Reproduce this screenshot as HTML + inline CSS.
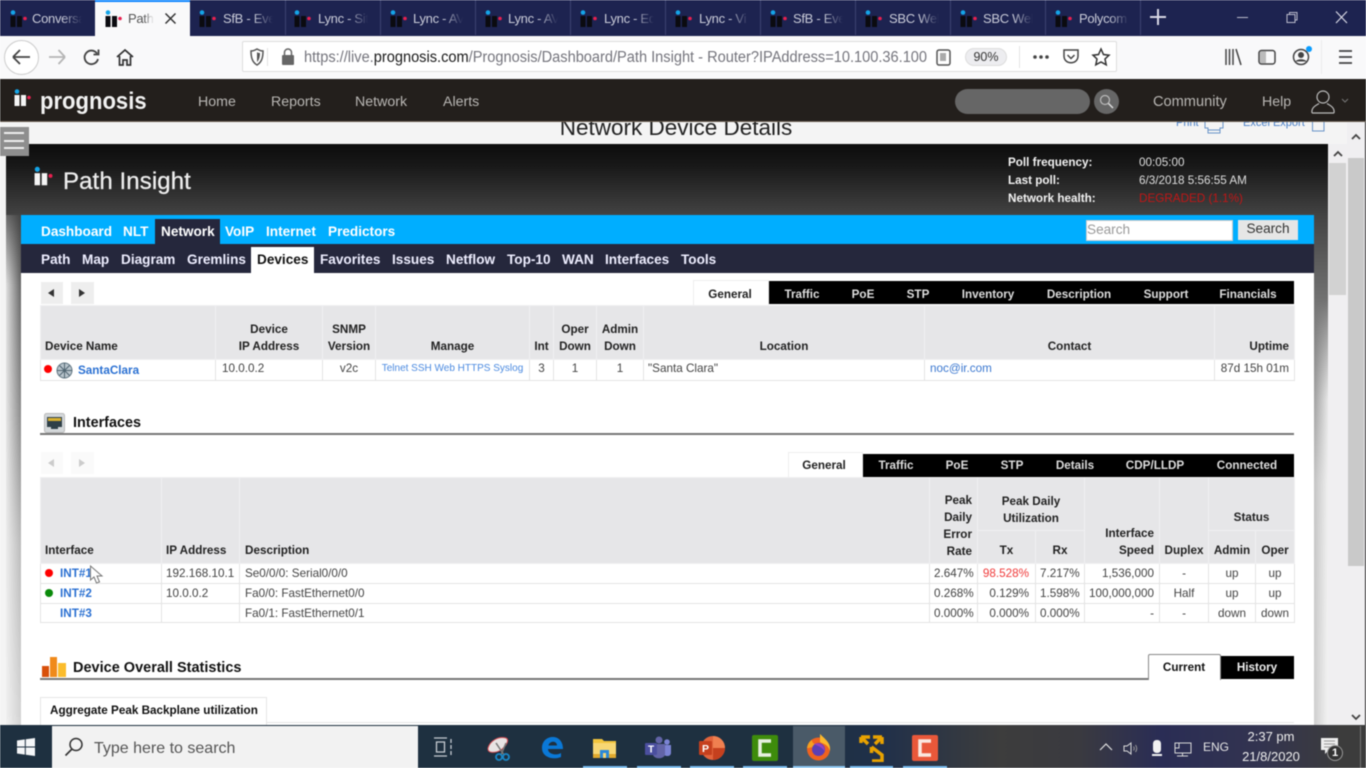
<!DOCTYPE html>
<html lang="en"><head><meta charset="utf-8"><title>Path Insight - Router</title>
<style>
html,body{margin:0;padding:0;width:1366px;height:768px;overflow:hidden;background:#fff}
body{font-family:"Liberation Sans",sans-serif;font-size:11.7px;color:#333}
#w{position:absolute;left:0;top:0;width:1366px;height:768px;overflow:hidden;filter:blur(.45px)}
.a{position:absolute;white-space:nowrap}
.b{position:absolute}
.c{position:absolute;white-space:nowrap;transform:translateX(-50%)}
.tab{position:absolute;top:11px;font-size:13px;letter-spacing:-.3px;line-height:15px;color:#c9cbd8;white-space:nowrap;width:50px;overflow:hidden;-webkit-mask-image:linear-gradient(90deg,#000 60%,transparent 100%)}
.sep{position:absolute;top:0;width:1px;height:35px;background:#3c4270}
.tl{position:absolute;top:10px;width:20px;height:18px}
.nav{position:absolute;top:94px;font-size:14.2px;line-height:17px;color:#b9b7b4;white-space:nowrap}
.n1{position:absolute;top:223px;font-size:13.6px;font-weight:bold;line-height:17px;color:#fff;white-space:nowrap}
.n2{position:absolute;top:251px;font-size:13.6px;font-weight:bold;line-height:17px;color:#eef;white-space:nowrap}
.bt{position:absolute;font-size:11.7px;font-weight:bold;line-height:15px;color:#ddd;white-space:nowrap;transform:translateX(-50%)}
table{position:absolute;border-collapse:collapse;table-layout:fixed;font-size:11.7px;color:#444}
td,th{border:1px solid #e4e4e4;padding:0 4px;overflow:hidden;white-space:nowrap;line-height:17px}
th{background:#e6e6e8;font-weight:bold;color:#222;vertical-align:bottom;padding-bottom:4px;border-color:#f0f0f2;border-width:1px}
.r{text-align:right}.m{text-align:center}.l{text-align:left}
.r{padding-right:5px}
td a,.lk{color:#2a70d2;font-weight:bold;text-decoration:none}
.u{position:absolute;top:766px;height:2px;background:#76b9ed}
</style></head><body><div id="w">

<!-- browser tab strip -->
<div class="b" style="left:0;top:0;width:1366px;height:36px;background:#1d2350"></div>
<div class="b" style="left:95px;top:0;width:95px;height:36px;background:#f9f9fa;border-top:2px solid #0a84ff;box-sizing:border-box"></div>
<svg width="0" height="0" style="position:absolute"><defs>
<g id="tl"><circle cx="3" cy="2.5" r="2.3" fill="#14a5e8"/><rect x="0.5" y="6" width="5" height="11" fill="#0b0b10"/><rect x="7" y="6" width="5" height="11" fill="#0b0b10"/><circle cx="15" cy="8.5" r="1.8" fill="#e8204f"/></g>
<g id="wl"><circle cx="3" cy="2.5" r="2.3" fill="#14a5e8"/><rect x="0.5" y="6" width="5" height="11" fill="#f4f4f4"/><rect x="7" y="6" width="5" height="11" fill="#f4f4f4"/><circle cx="15" cy="8.5" r="1.8" fill="#e8204f"/></g>
</defs></svg>
<svg class="tl" style="left:10px" viewBox="0 0 20 18"><use href="#tl"/></svg><div class="tab" style="left:32px">Conversa</div>
<svg class="tl" style="left:105px" viewBox="0 0 20 18"><use href="#tl"/></svg><div class="tab" style="left:128px;width:26px;color:#555">Path I</div>
<svg class="b" style="left:164px;top:12px" width="13" height="13" viewBox="0 0 13 13"><path d="M1.5 1.5L11.5 11.5M11.5 1.5L1.5 11.5" stroke="#333" stroke-width="1.5"/></svg>
<svg class="tl" style="left:199px" viewBox="0 0 20 18"><use href="#tl"/></svg><div class="tab" style="left:223px">SfB - Eve</div><div class="sep" style="left:285px"></div>
<svg class="tl" style="left:294px" viewBox="0 0 20 18"><use href="#tl"/></svg><div class="tab" style="left:318px">Lync - Sit</div><div class="sep" style="left:380px"></div>
<svg class="tl" style="left:390px" viewBox="0 0 20 18"><use href="#tl"/></svg><div class="tab" style="left:413px">Lync - AV</div><div class="sep" style="left:475px"></div>
<svg class="tl" style="left:485px" viewBox="0 0 20 18"><use href="#tl"/></svg><div class="tab" style="left:508px">Lync - AV</div><div class="sep" style="left:570px"></div>
<svg class="tl" style="left:580px" viewBox="0 0 20 18"><use href="#tl"/></svg><div class="tab" style="left:604px">Lync - Ed</div><div class="sep" style="left:665px"></div>
<svg class="tl" style="left:675px" viewBox="0 0 20 18"><use href="#tl"/></svg><div class="tab" style="left:699px">Lync - Vi</div><div class="sep" style="left:760px"></div>
<svg class="tl" style="left:770px" viewBox="0 0 20 18"><use href="#tl"/></svg><div class="tab" style="left:793px">SfB - Eve</div><div class="sep" style="left:855px"></div>
<svg class="tl" style="left:865px" viewBox="0 0 20 18"><use href="#tl"/></svg><div class="tab" style="left:889px">SBC Wel</div><div class="sep" style="left:950px"></div>
<svg class="tl" style="left:960px" viewBox="0 0 20 18"><use href="#tl"/></svg><div class="tab" style="left:983px">SBC Wel</div><div class="sep" style="left:1045px"></div>
<svg class="tl" style="left:1055px" viewBox="0 0 20 18"><use href="#tl"/></svg><div class="tab" style="left:1079px">Polycom</div><div class="sep" style="left:1140px"></div>
<svg class="b" style="left:1150px;top:9px" width="16" height="16" viewBox="0 0 16 16"><path d="M8 0V16M0 8H16" stroke="#d8d8e4" stroke-width="2"/></svg>
<svg class="b" style="left:1236px;top:9px" width="116" height="18" viewBox="0 0 116 18"><path d="M1 8.5H12" stroke="#bbc" stroke-width="1"/><path d="M51 5.5H59V13.5H51ZM53.5 5.5V3.5H61V11H59" fill="none" stroke="#bbc" stroke-width="1"/><path d="M100 2.5L111 14M111 2.5L100 14" stroke="#d8d8e4" stroke-width="1.2"/></svg>

<!-- toolbar -->
<div class="b" style="left:0;top:36px;width:1366px;height:43px;background:#f9f9fa"></div>
<div class="b" style="left:4px;top:40px;width:33px;height:33px;border-radius:50%;background:#fff;border:1px solid #ccc"></div>
<svg class="b" style="left:0;top:36px" width="140" height="43" viewBox="0 0 140 43"><path d="M13 21H30M13 21L20 14M13 21L20 28" fill="none" stroke="#444" stroke-width="1.8"/><path d="M49 21H65M65 21L58.500 14M65 21L58.500 28" fill="none" stroke="#b5b5b5" stroke-width="1.8"/><path d="M97 17.500A6.800 6.800 0 1 0 98 23M98.500 13.500V18.500H93.500" fill="none" stroke="#444" stroke-width="1.8"/><path d="M117 21L125 14L133 21M119.500 20V29H123V24H127V29H130.500V20" fill="none" stroke="#333" stroke-width="1.7"/></svg>
<div class="b" style="left:242px;top:41px;width:875px;height:31px;background:#fff;border:1px solid #ddd;box-sizing:border-box;border-radius:2px"></div>
<svg class="b" style="left:249px;top:48px" width="48" height="18" viewBox="0 0 48 18"><path d="M2 3C5 3 6 2 8 1C10 2 11 3 14 3C14 9 13 14 8 17C3 14 2 9 2 3Z" fill="none" stroke="#555" stroke-width="1.500"/><path d="M8 4C9 5 10 5 11 5C11 9 10 12 8 14Z" fill="#555"/><rect x="18" y="0" width="1" height="18" fill="#e2e2e2"/><rect x="33" y="7" width="12" height="10" rx="1" fill="#666"/><path d="M35.500 7V4.500A3.500 3.500 0 0 1 42.500 4.500V7" fill="none" stroke="#666" stroke-width="1.500"/></svg>
<div class="a" style="left:304px;top:49px;font-size:15.4px;line-height:18px;color:#74747c;transform:scaleX(.948);transform-origin:0 0">https://live.<span style="color:#1a1a1a">prognosis.com</span>/Prognosis/Dashboard/Path Insight - Router?IPAddress=10.100.36.100</div>
<svg class="b" style="left:936px;top:49px" width="16" height="17" viewBox="0 0 16 17"><rect x="1" y="1" width="13" height="15" rx="2" fill="none" stroke="#555" stroke-width="1.500"/><rect x="4" y="4" width="6" height="8" fill="#aaa"/></svg>
<div class="b" style="left:965px;top:48px;width:42px;height:18px;border-radius:9px;background:#ededf0;border:1px solid #ddd;box-sizing:border-box;text-align:center;font-size:12.500px;line-height:17px;color:#333">90%</div>
<div class="b" style="left:1019px;top:46px;width:1px;height:22px;background:#e4e4e4"></div>
<div class="b" style="left:1321px;top:40px;width:1px;height:34px;background:#ececec"></div>
<svg class="b" style="left:1032px;top:46px" width="84" height="22" viewBox="0 0 84 22"><circle cx="3" cy="11" r="1.800" fill="#444"/><circle cx="9" cy="11" r="1.800" fill="#444"/><circle cx="15" cy="11" r="1.800" fill="#444"/><path d="M32 4H46V10C46 19 32 19 32 10Z" fill="none" stroke="#444" stroke-width="1.500"/><path d="M35.500 9L39 12.500L42.500 9" fill="none" stroke="#444" stroke-width="1.500"/><path d="M69 3L71.500 8.500L77 9.200L73 13L74.200 18.800L69 16L63.800 18.800L65 13L61 9.200L66.500 8.500Z" fill="none" stroke="#333" stroke-width="1.500"/></svg>
<svg class="b" style="left:1224px;top:46px" width="130" height="22" viewBox="0 0 130 22"><path d="M2 3V19M5.500 3V19M9 3V19M12 3L17 19" fill="none" stroke="#444" stroke-width="1.500"/><rect x="35" y="4.500" width="16" height="13.500" rx="2.500" fill="none" stroke="#444" stroke-width="1.500"/><rect x="36" y="5.500" width="6" height="11.500" fill="#bbb"/><circle cx="77" cy="11" r="7.500" fill="none" stroke="#444" stroke-width="1.500"/><circle cx="77" cy="9" r="3" fill="#444"/><path d="M71.500 15.500C73 12.500 81 12.500 82.500 15.500" fill="#444"/><circle cx="85" cy="3" r="3" fill="#0a9dff"/><path d="M115 5H128M115 11H128M115 17H128" stroke="#444" stroke-width="1.800"/></svg>

<!-- site nav -->
<div class="b" style="left:0;top:79px;width:1366px;height:43px;background:#231f1c;border-bottom:1px solid #6b5f52;box-sizing:border-box"></div>
<svg class="b" style="left:14px;top:89px" width="20" height="19" viewBox="0 0 20 19"><use href="#wl"/></svg>
<div class="a" style="left:40px;top:87px;font-size:24.500px;font-weight:bold;line-height:29px;color:#f2f2f2;transform:scaleX(.9);transform-origin:0 0">prognosis</div>
<div class="nav" style="left:198px">Home</div><div class="nav" style="left:271px">Reports</div><div class="nav" style="left:355px">Network</div><div class="nav" style="left:443px">Alerts</div>
<div class="b" style="left:955px;top:89px;width:135px;height:25px;border-radius:13px;background:#666"></div>
<div class="b" style="left:1094px;top:89px;width:25px;height:25px;border-radius:50%;background:#666"></div>
<svg class="b" style="left:1099px;top:94px" width="15" height="15" viewBox="0 0 15 15"><circle cx="6" cy="6" r="4.500" fill="none" stroke="#bbb" stroke-width="1.200"/><path d="M9.500 9.500L14 14" stroke="#ddd" stroke-width="1.500"/></svg>
<div class="nav" style="left:1153px;font-size:14.6px">Community</div><div class="nav" style="left:1262px">Help</div>
<svg class="b" style="left:1310px;top:89px" width="42" height="26" viewBox="0 0 42 26"><circle cx="13" cy="8" r="6" fill="none" stroke="#bbb" stroke-width="1.200"/><path d="M2 24C1 18 7 16 9 14.500M24 24C25 18 19 16 17 14.500M2 24H24" fill="none" stroke="#bbb" stroke-width="1.200"/><path d="M32 10L35 13L38 10" fill="none" stroke="#777" stroke-width="1"/></svg>

<!-- page background and clipped title -->
<div class="b" style="left:0;top:122px;width:1366px;height:604px;background:#f4f4f4;overflow:hidden">
  <div class="c" style="left:676px;top:-8px;font-size:22.500px;line-height:27px;color:#222">Network Device Details</div>
  <div class="a" style="left:1176px;top:-5px;font-size:11px;line-height:13px;color:#4a80c8">Print</div>
  <div class="a" style="left:1243px;top:-5px;font-size:11px;line-height:13px;color:#4a80c8">Excel Export</div>
  <svg class="b" style="left:1204px;top:0" width="122" height="13" viewBox="0 0 122 13"><path d="M1 0V6H4V11H16V6H19V0M4 8H16" fill="none" stroke="#6a94c8" stroke-width="1"/><path d="M108.500 0V9H120V0" fill="none" stroke="#6a94c8" stroke-width="1"/></svg>
</div>

<!-- page frame with side shadows -->
<div class="b" style="left:6px;top:144px;width:15px;height:582px;background:linear-gradient(180deg,#0d0d0d 0,#434343 71px,#6a6a6a 150px,#888 260px,#bbb 400px,#d4d4d4 582px)"></div>
<div class="b" style="left:6px;top:215px;width:15px;height:511px;background:linear-gradient(90deg,rgba(245,245,245,.85),rgba(245,245,245,0));-webkit-mask-image:linear-gradient(180deg,rgba(0,0,0,.25) 0,#000 70px)"></div>
<div class="b" style="left:1314px;top:144px;width:14px;height:582px;background:linear-gradient(180deg,#0d0d0d 0,#434343 71px,#6f6f6f 150px,#999 240px,#c4c4c4 340px,#cfcfcf 582px)"></div>
<div class="b" style="left:1314px;top:300px;width:14px;height:426px;background:linear-gradient(90deg,rgba(255,255,255,0),rgba(255,255,255,.75));-webkit-mask-image:linear-gradient(180deg,transparent 0,#000 100px)"></div>
<div class="b" style="left:21px;top:144px;width:1293px;height:582px;background:#fff"></div>
<div class="b" style="left:6px;top:144px;width:1322px;height:71px;background:linear-gradient(180deg,#0d0d0d 0,#181818 30%,#434343 100%)"></div>

<!-- scrollbars -->
<div class="b" style="left:1328px;top:144px;width:19px;height:582px;background:#f0eff1"></div>
<div class="b" style="left:1329px;top:163px;width:17px;height:132px;background:#d2d2d2"></div>
<div class="b" style="left:1347px;top:122px;width:18px;height:604px;background:#f0eff1"></div>
<div class="b" style="left:1348px;top:158px;width:16px;height:408px;background:#c9c9c9"></div>
<div class="b" style="left:1365px;top:122px;width:1px;height:604px;background:#222"></div>
<svg class="b" style="left:1332px;top:150px" width="12" height="8" viewBox="0 0 12 8"><path d="M2 6L6 2L10 6" fill="none" stroke="#444" stroke-width="1.800"/></svg>
<svg class="b" style="left:1350px;top:133px" width="12" height="8" viewBox="0 0 12 8"><path d="M2 6L6 2L10 6" fill="none" stroke="#444" stroke-width="1.800"/></svg>
<svg class="b" style="left:1350px;top:713px" width="12" height="8" viewBox="0 0 12 8"><path d="M2 2L6 6L10 2" fill="none" stroke="#444" stroke-width="1.800"/></svg>

<!-- hamburger -->
<div class="b" style="left:0;top:127px;width:29px;height:29px;background:#8e8e8e"></div>
<div class="b" style="left:4px;top:132px;width:20px;height:2px;background:#eee"></div>
<div class="b" style="left:4px;top:140px;width:20px;height:2px;background:#eee"></div>
<div class="b" style="left:4px;top:147px;width:20px;height:2px;background:#eee"></div>

<!-- path insight header -->
<svg class="b" style="left:34px;top:166px" width="22" height="22" viewBox="0 0 20 19"><use href="#wl"/></svg>
<div class="a" style="left:63px;top:168px;font-size:24px;line-height:28px;color:#eee;letter-spacing:.1px;-webkit-text-stroke:.25px #eee">Path Insight</div>
<div class="a" style="left:1008px;top:155px;font-weight:bold;color:#f2f2f2;line-height:15px">Poll frequency:</div>
<div class="a" style="left:1008px;top:173px;font-weight:bold;color:#f2f2f2;line-height:15px">Last poll:</div>
<div class="a" style="left:1008px;top:191px;font-weight:bold;color:#f2f2f2;line-height:15px">Network health:</div>
<div class="a" style="left:1139px;top:155px;color:#ddd;line-height:15px">00:05:00</div>
<div class="a" style="left:1139px;top:173px;color:#ddd;line-height:15px">6/3/2018 5:56:55 AM</div>
<div class="a" style="left:1139px;top:191px;color:#c01616;line-height:15px">DEGRADED (1.1%)</div>

<!-- nav bars -->
<div class="b" style="left:21px;top:215px;width:1293px;height:29px;background:#00aeff"></div>
<div class="b" style="left:155px;top:219px;width:65px;height:25px;background:#25273c"></div>
<div class="b" style="left:21px;top:244px;width:1293px;height:29px;background:#25273c"></div>
<div class="b" style="left:251px;top:247px;width:63px;height:26px;background:#fff"></div>
<div class="n1" style="left:41px">Dashboard</div><div class="n1" style="left:123px">NLT</div><div class="n1" style="left:161px">Network</div><div class="n1" style="left:225px">VoIP</div><div class="n1" style="left:266px">Internet</div><div class="n1" style="left:328px">Predictors</div>
<div class="n2" style="left:41px">Path</div><div class="n2" style="left:82px">Map</div><div class="n2" style="left:121px">Diagram</div><div class="n2" style="left:187px">Gremlins</div><div class="n2" style="left:257px;color:#111">Devices</div><div class="n2" style="left:320px">Favorites</div><div class="n2" style="left:392px">Issues</div><div class="n2" style="left:446px">Netflow</div><div class="n2" style="left:507px">Top-10</div><div class="n2" style="left:562px">WAN</div><div class="n2" style="left:605px">Interfaces</div><div class="n2" style="left:681px">Tools</div>
<div class="b" style="left:1086px;top:220px;width:147px;height:21px;background:#fff;border:1px solid #ccc;box-sizing:border-box;font-size:13.6px;line-height:17px;color:#999;padding-left:0">Search</div>
<div class="b" style="left:1238px;top:220px;width:60px;height:20px;background:#e6e6e6;text-align:center;font-size:13.6px;line-height:18px;color:#333">Search</div>

<!-- device tabs -->
<div class="b" style="left:41px;top:282px;width:22px;height:22px;background:#eee"></div>
<div class="b" style="left:71px;top:282px;width:23px;height:22px;background:#eee"></div>
<svg class="b" style="left:47px;top:288px" width="44" height="10" viewBox="0 0 44 10"><path d="M1 5L7 1V9Z" fill="#333"/><path d="M32 1L38 5L32 9Z" fill="#333"/></svg>
<div class="b" style="left:693px;top:280px;width:76px;height:25px;background:#fff;border:1px solid #eee;border-bottom:0;box-sizing:border-box"></div>
<div class="b" style="left:769px;top:281px;width:525px;height:23px;background:#000"></div>
<div class="bt" style="left:730px;top:287px;color:#222">General</div><div class="bt" style="left:802px;top:287px">Traffic</div><div class="bt" style="left:863px;top:287px">PoE</div><div class="bt" style="left:918px;top:287px">STP</div><div class="bt" style="left:988px;top:287px">Inventory</div><div class="bt" style="left:1079px;top:287px">Description</div><div class="bt" style="left:1166px;top:287px">Support</div><div class="bt" style="left:1248px;top:287px">Financials</div>

<!-- device table -->
<table style="left:40px;top:305px;width:1254px">
<colgroup><col style="width:175px"><col style="width:107px"><col style="width:53px"><col style="width:154px"><col style="width:24px"><col style="width:43px"><col style="width:47px"><col style="width:281px"><col style="width:290px"><col style="width:80px"></colgroup>
<tr style="height:54px"><th class="l">Device Name</th><th class="m">Device<br>IP Address</th><th class="m" style="padding:0 0 4px">SNMP<br>Version</th><th class="m">Manage</th><th class="m" style="padding:0 0 4px">Int</th><th class="m" style="padding:0 0 4px">Oper<br>Down</th><th class="m" style="padding:0 0 4px">Admin<br>Down</th><th class="m">Location</th><th class="m">Contact</th><th class="r">Uptime</th></tr>
<tr style="height:21px"><td style="padding-left:37px;padding-top:1px"><a href="#">SantaClara</a></td><td style="padding-left:6px;vertical-align:top">10.0.0.2</td><td class="m" style="vertical-align:top">v2c</td><td class="m" style="font-size:10px;color:#4b8ae0;padding:0;vertical-align:top">Telnet SSH Web HTTPS Syslog</td><td class="m" style="padding:0;vertical-align:top">3</td><td class="m" style="vertical-align:top">1</td><td class="m" style="vertical-align:top">1</td><td style="vertical-align:top">"Santa Clara"</td><td style="color:#3b78d0;vertical-align:top;padding-left:5px">noc@ir.com</td><td class="r" style="vertical-align:top;padding:0 5px 0 0">87d 15h 01m</td></tr>
</table>
<div class="b" style="left:44px;top:365px;width:8px;height:8px;border-radius:50%;background:#f00"></div>
<svg class="b" style="left:56px;top:362px" width="17" height="17" viewBox="0 0 17 17"><circle cx="8.500" cy="8.500" r="7.500" fill="#b8c4cc" stroke="#5f7481"/><path d="M8.500 1V16M1 8.500H16M3.500 3.500L13.500 13.500M13.500 3.500L3.500 13.500" stroke="#4f6470" stroke-width="1"/></svg>

<!-- interfaces -->
<svg class="b" style="left:44px;top:413px" width="21" height="20" viewBox="0 0 21 20"><rect x=".5" y=".5" width="20" height="19" rx="2" fill="#d4d8da" stroke="#bbb"/><rect x="3" y="4" width="15" height="10" fill="#2f4048"/><rect x="4" y="5" width="13" height="3" fill="#d8b030"/><path d="M7 14H14V16H7Z" fill="#2f4048"/></svg>
<div class="a" style="left:73px;top:415px;font-size:14.4px;font-weight:bold;line-height:17px;color:#111">Interfaces</div>
<div class="b" style="left:40px;top:433px;width:1254px;height:2px;background:#777"></div>
<div class="b" style="left:41px;top:452px;width:22px;height:22px;background:#fafafa"></div>
<div class="b" style="left:71px;top:452px;width:23px;height:22px;background:#fafafa"></div>
<svg class="b" style="left:47px;top:458px" width="44" height="10" viewBox="0 0 44 10"><path d="M1 5L7 1V9Z" fill="#ccc"/><path d="M32 1L38 5L32 9Z" fill="#ccc"/></svg>
<div class="b" style="left:788px;top:452px;width:75px;height:25px;background:#fff;border:1px solid #eee;border-bottom:0;box-sizing:border-box"></div>
<div class="b" style="left:863px;top:454px;width:431px;height:23px;background:#000"></div>
<div class="bt" style="left:824px;top:458px;color:#222">General</div><div class="bt" style="left:896px;top:458px">Traffic</div><div class="bt" style="left:957px;top:458px">PoE</div><div class="bt" style="left:1012px;top:458px">STP</div><div class="bt" style="left:1075px;top:458px">Details</div><div class="bt" style="left:1155px;top:458px">CDP/LLDP</div><div class="bt" style="left:1247px;top:458px">Connected</div>

<table style="left:40px;top:477px;width:1254px">
<colgroup><col style="width:121px"><col style="width:78px"><col style="width:690px"><col style="width:48px"><col style="width:58px"><col style="width:49px"><col style="width:75px"><col style="width:49px"><col style="width:47px"><col style="width:39px"></colgroup>
<tr style="height:53px"><th rowspan="2" class="l">Interface</th><th rowspan="2" class="l">IP Address</th><th rowspan="2" class="l" style="padding-left:5px">Description</th><th rowspan="2" class="r" style="padding:0 5px 3px 0">Peak<br>Daily<br>Error<br>Rate</th><th colspan="2" class="m" style="vertical-align:top;padding:15px 0 0">Peak Daily<br>Utilization</th><th rowspan="2" class="r">Interface<br>Speed</th><th rowspan="2" class="m" style="padding:0 0 4px">Duplex</th><th colspan="2" class="m" style="padding-bottom:4px">Status</th></tr>
<tr style="height:33px"><th class="m">Tx</th><th class="m">Rx</th><th class="m" style="padding:0 0 4px">Admin</th><th class="m" style="padding:0 0 4px">Oper</th></tr>
<tr style="height:20px"><td style="padding-left:19px"><a href="#">INT#1</a></td><td style="padding-right:0">192.168.10.1</td><td style="padding-left:5px">Se0/0/0: Serial0/0/0</td><td class="r">2.647%</td><td class="r" style="color:#f03a3a;padding-right:6px">98.528%</td><td class="r">7.217%</td><td class="r">1,536,000</td><td class="m">-</td><td class="m">up</td><td class="m" style="padding:0">up</td></tr>
<tr style="height:20px"><td style="padding-left:19px"><a href="#">INT#2</a></td><td>10.0.0.2</td><td style="padding-left:5px">Fa0/0: FastEthernet0/0</td><td class="r">0.268%</td><td class="r" style="padding-right:6px">0.129%</td><td class="r">1.598%</td><td class="r" style="padding-left:0">100,000,000</td><td class="m">Half</td><td class="m">up</td><td class="m" style="padding:0">up</td></tr>
<tr style="height:19px"><td style="padding-left:19px"><a href="#">INT#3</a></td><td></td><td style="padding-left:5px">Fa0/1: FastEthernet0/1</td><td class="r">0.000%</td><td class="r" style="padding-right:6px">0.000%</td><td class="r">0.000%</td><td class="r">-</td><td class="m">-</td><td class="m">down</td><td class="m" style="padding:0">down</td></tr>
</table>
<div class="b" style="left:45px;top:569px;width:8px;height:8px;border-radius:50%;background:#f00"></div>
<div class="b" style="left:45px;top:589px;width:8px;height:8px;border-radius:50%;background:#0a8a0a"></div>
<svg class="b" style="left:89px;top:565px" width="16" height="20" viewBox="0 0 16 20"><path d="M1.500 1V15L5 12L7.500 18L10.500 17L8 11H13Z" fill="#fff" stroke="#777" stroke-width="1"/></svg>

<!-- overall statistics -->
<svg class="b" style="left:42px;top:657px" width="24" height="20" viewBox="0 0 24 20"><rect x="0" y="9" width="7" height="11" fill="#d8500a"/><rect x="8" y="0" width="7" height="20" fill="#f08a1a"/><rect x="16" y="6" width="8" height="14" fill="#fbbc2c"/></svg>
<div class="a" style="left:73px;top:660px;font-size:14.5px;font-weight:bold;line-height:17px;color:#111">Device Overall Statistics</div>
<div class="b" style="left:40px;top:678px;width:1108px;height:2px;background:#777"></div>
<div class="b" style="left:1148px;top:654px;width:73px;height:26px;background:#fff;border:1px solid #888;border-bottom:0;box-sizing:border-box;border-radius:2px 2px 0 0"></div>
<div class="b" style="left:1221px;top:656px;width:73px;height:23px;background:#000"></div>
<div class="bt" style="left:1184px;top:660px;color:#111">Current</div><div class="bt" style="left:1257px;top:660px;color:#eee">History</div>
<div class="b" style="left:40px;top:697px;width:227px;height:29px;background:#fff;border:1px solid #e6e6e6;border-bottom:0;box-sizing:border-box"></div>
<div class="b" style="left:267px;top:722px;width:1027px;height:1px;background:#e6e6e6"></div>
<div class="a" style="left:50px;top:703px;font-weight:bold;line-height:15px;color:#111">Aggregate Peak Backplane utilization</div>

<!-- taskbar -->
<div class="b" style="left:0;top:725px;width:1366px;height:43px;background:linear-gradient(90deg,#1e3040 0,#1e3040 800px,#20304a 880px,#3d3d3d 1000px,#3a3a40 1080px,#2a2d55 1160px,#333450 1260px,#3c3c3c 1340px)"></div>
<div class="b" style="left:52px;top:726px;width:366px;height:42px;background:#f2f2f2"></div>
<svg class="b" style="left:17px;top:738px" width="18" height="18" viewBox="0 0 18 18"><path d="M0 2.500L7.800 1.400V8.500H0ZM8.800 1.300L18 0V8.500H8.800ZM0 9.500H7.800V16.600L0 15.500ZM8.800 9.500H18V18L8.800 16.700Z" fill="#f4f6f8"/></svg>
<svg class="b" style="left:64px;top:737px" width="20" height="20" viewBox="0 0 20 20"><circle cx="12" cy="7.500" r="6" fill="none" stroke="#333" stroke-width="1.500"/><path d="M8 12L1.500 18.500" stroke="#333" stroke-width="1.700"/></svg>
<div class="a" style="left:94px;top:739px;font-size:16px;line-height:20px;color:#555">Type here to search</div>
<div class="b" style="left:793px;top:726px;width:52px;height:42px;background:#4a5a68"></div>
<div class="u" style="left:583px;width:44px"></div><div class="u" style="left:637px;width:44px"></div><div class="u" style="left:690px;width:44px"></div><div class="u" style="left:743px;width:44px"></div><div class="u" style="left:793px;width:52px;background:#8cc6f2"></div><div class="u" style="left:850px;width:43px"></div><div class="u" style="left:903px;width:44px"></div>
<!-- task view -->
<svg class="b" style="left:433px;top:737px" width="20" height="20" viewBox="0 0 20 20"><path d="M1 1H14M1 19H14M3.500 5H11.500V15H3.500Z" fill="none" stroke="#c6ccd2" stroke-width="1.300"/><path d="M18 2V6M18 8V12M18 14V18" stroke="#c6ccd2" stroke-width="1.300"/></svg>
<!-- snip -->
<svg class="b" style="left:486px;top:736px" width="26" height="26" viewBox="0 0 26 26"><path d="M2 12C4 5 12 0 20 2C24 4 20 10 15 14C10 17 1 18 2 12Z" fill="#e8e4e4" stroke="#d24a50" stroke-width="1"/><path d="M10 7L18 19M20 7L15 19" stroke="#777" stroke-width="1.500"/><circle cx="20" cy="21" r="3" fill="none" stroke="#1a88c8" stroke-width="1.800"/><circle cx="13" cy="21" r="3" fill="none" stroke="#1a88c8" stroke-width="1.800"/></svg>
<!-- edge -->
<svg class="b" style="left:541px;top:737px" width="22" height="22" viewBox="0 0 22 22"><path d="M1 11C1 4 6 0 12 0C18 0 22 5 22 12H7C7 17 15 19 20 16V20C13 23 1 21 1 11ZM7.500 8.500H16C16 3.500 8.500 3.500 7.500 8.500Z" fill="#0a78d7"/></svg>
<!-- explorer -->
<svg class="b" style="left:593px;top:737px" width="24" height="22" viewBox="0 0 24 22"><path d="M0 2H9L11 4H23V8H0Z" fill="#f2c53d"/><rect x="0" y="6" width="23" height="15" fill="#f7d774"/><rect x="0" y="17" width="23" height="4" fill="#e0a92e"/><rect x="7" y="13" width="9" height="8" fill="#2b88d8"/><rect x="10" y="16" width="3" height="5" fill="#f7d774"/></svg>
<!-- teams -->
<svg class="b" style="left:645px;top:736px" width="26" height="24" viewBox="0 0 26 24"><circle cx="14" cy="4" r="3.500" fill="#6264a7"/><circle cx="22" cy="6" r="2.800" fill="#7b83d4"/><path d="M18 9H26V17C26 20 22 21 19 19Z" fill="#7b83d4"/><path d="M7 8H20V18C20 23 10 24 8 19Z" fill="#6264a7"/><rect x="0" y="7" width="12" height="12" rx="1" fill="#4b4f9f"/><text x="6" y="16.500" font-size="10" font-weight="bold" fill="#fff" text-anchor="middle" font-family="Liberation Sans,sans-serif">T</text></svg>
<!-- ppt -->
<svg class="b" style="left:699px;top:736px" width="26" height="24" viewBox="0 0 26 24"><circle cx="14" cy="12" r="12" fill="#e2643c"/><path d="M14 0A12 12 0 0 1 26 12H14Z" fill="#f08050"/><path d="M14 12H26A12 12 0 0 1 14 24Z" fill="#c5401e"/><rect x="0" y="5" width="13" height="14" rx="1" fill="#c5401e"/><text x="6.500" y="16" font-size="10.500" font-weight="bold" fill="#fff" text-anchor="middle" font-family="Liberation Sans,sans-serif">P</text></svg>
<!-- camtasia green -->
<svg class="b" style="left:752px;top:735px" width="26" height="26" viewBox="0 0 26 26"><rect width="26" height="26" rx="2" fill="#3e8c0c"/><path d="M19 6H8V20H19" fill="none" stroke="#e8f0e0" stroke-width="3.500"/></svg>
<!-- firefox -->
<svg class="b" style="left:806px;top:734px" width="25" height="27" viewBox="0 0 25 27"><circle cx="12.500" cy="15" r="11.500" fill="#f0621f"/><path d="M14 0C19 5 25 9 24 17C22 10 17 10 14 8Z" fill="#fcb72b"/><path d="M1 14C2 9 4 7 6 6C6 9 8 10 10 10C8 13 5 14 1 14Z" fill="#f6a020"/><circle cx="12.500" cy="15.500" r="6.500" fill="#5c3fb5"/><path d="M8 10C13 8 19 11 18.500 17C16 13 12 12 8 10Z" fill="#9a3fc0"/></svg>
<!-- yellow app -->
<svg class="b" style="left:858px;top:734px" width="27" height="28" viewBox="0 0 27 28"><g fill="none" stroke="#e8a200" stroke-width="3.500"><path d="M3 3H12M24 3H15M3 3V9M24 3V10M3 3L10 10M24 3L17 10M13.500 13V19M13.500 13L24 21V27H14"/></g></svg>
<!-- camtasia orange -->
<svg class="b" style="left:912px;top:735px" width="26" height="26" viewBox="0 0 26 26"><rect width="26" height="26" rx="2" fill="#e9583a"/><path d="M19 6H8V20H19" fill="none" stroke="#fbe8e0" stroke-width="3.500"/></svg>

<!-- tray -->
<svg class="b" style="left:1098px;top:740px" width="95" height="18" viewBox="0 0 95 18"><path d="M2 10L8 4L14 10" fill="none" stroke="#e0e0e0" stroke-width="1.200"/><path d="M26 6H29L33 3V14L29 11H26Z" fill="none" stroke="#dcdcdc" stroke-width="1"/><path d="M35.500 6.500Q37 8.500 35.500 10.500M37.500 5Q40 8.500 37.500 12" fill="none" stroke="#9a9a9a" stroke-width="1"/><rect x="55" y="0" width="8" height="13" rx="3.500" fill="#f2f2f2"/><path d="M54 15H64" stroke="#f2f2f2" stroke-width="2"/><rect x="77" y="3" width="16" height="10" fill="none" stroke="#d8d8d8" stroke-width="1"/><path d="M79 16H90M84.500 13V16M77 8H81V3" fill="none" stroke="#d8d8d8" stroke-width="1"/></svg>
<div class="a" style="left:1203px;top:740px;font-size:12px;line-height:15px;color:#e6e6e6">ENG</div>
<div class="c" style="left:1271px;top:729px;font-size:13px;line-height:16px;color:#eee">2:37 pm</div>
<div class="c" style="left:1271px;top:749px;font-size:13px;line-height:16px;color:#eee">21/8/2020</div>
<svg class="b" style="left:1320px;top:738px" width="26" height="26" viewBox="0 0 26 26"><path d="M1 0H18V12H9L5 16V12H1Z" fill="#ededed"/><path d="M4 3H15M4 6H15M4 9H11" stroke="#999" stroke-width="1"/><circle cx="15" cy="15" r="7.500" fill="#333" stroke="#999" stroke-width="1"/></svg>
<div class="c" style="left:1335px;top:746px;font-size:11px;font-weight:bold;line-height:14px;color:#fff">1</div>
<div class="b" style="left:1360px;top:726px;width:1px;height:42px;background:#777"></div>

</div></body></html>
